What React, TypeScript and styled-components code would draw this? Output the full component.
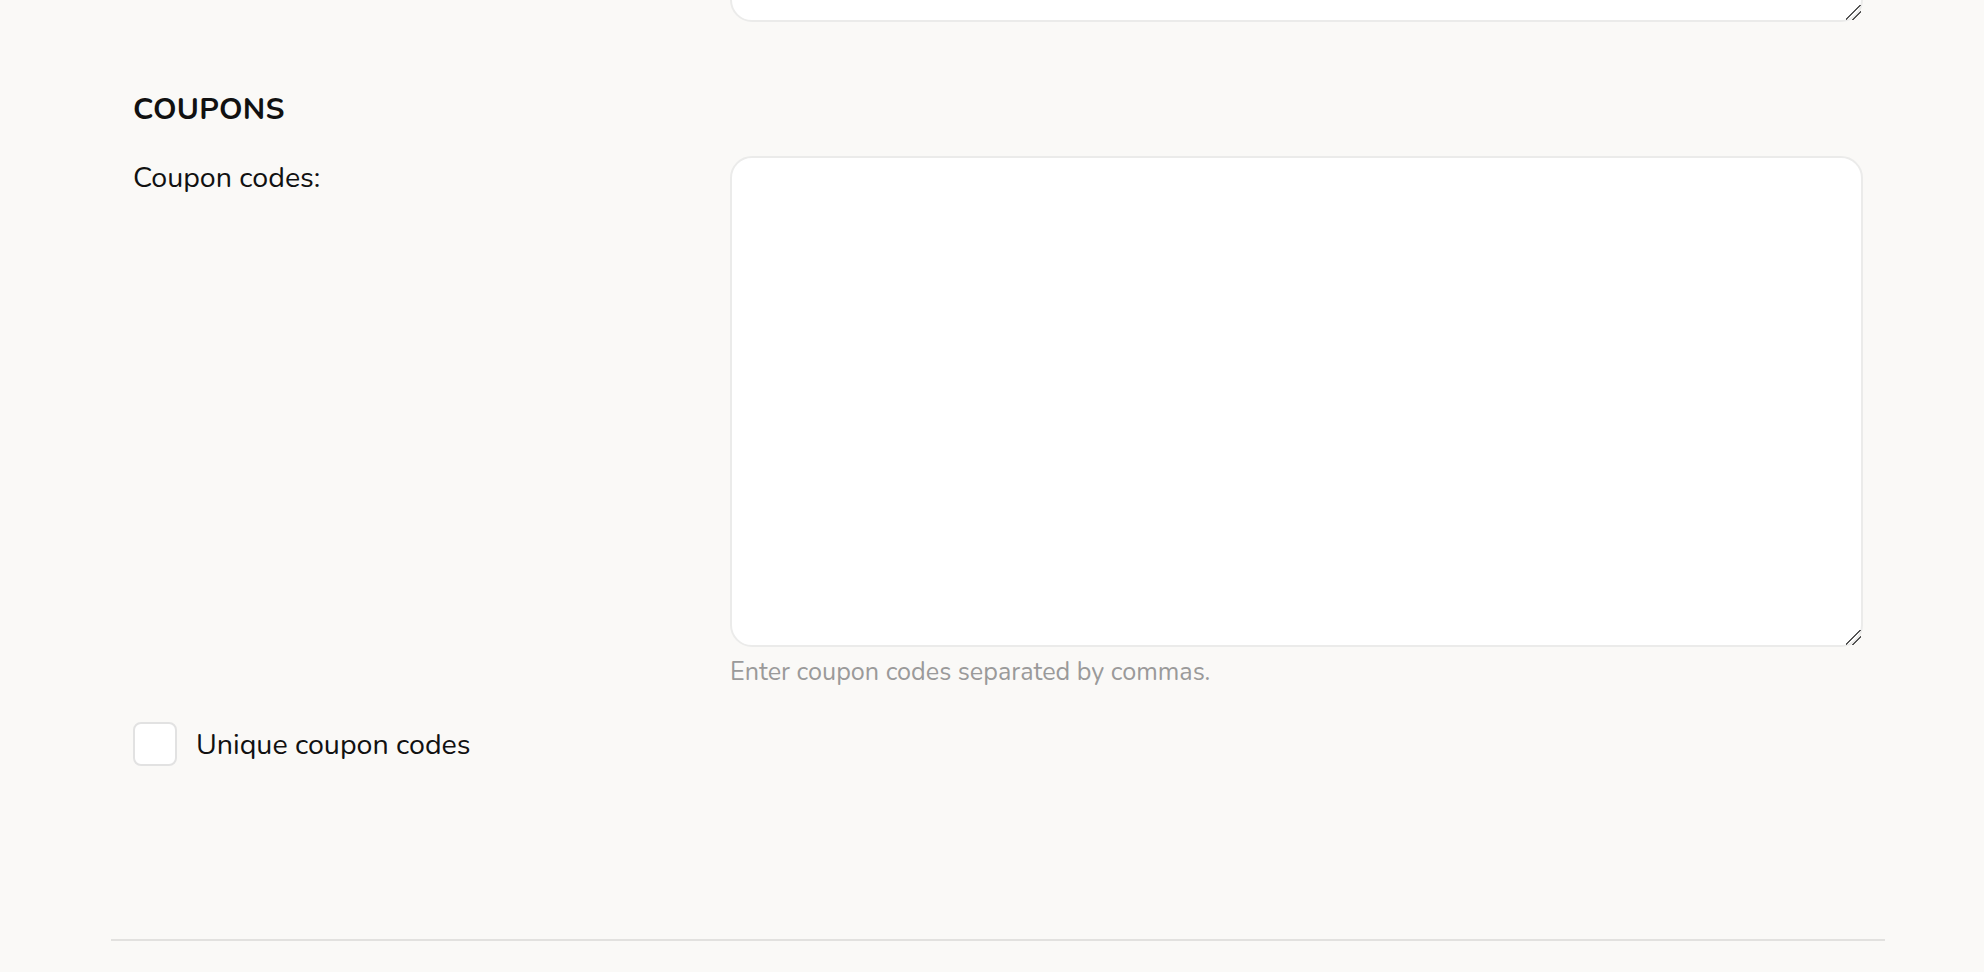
import { FC } from "react";
import styled, { createGlobalStyle } from "styled-components";

const GlobalStyle = createGlobalStyle`
  html, body {
    margin: 0;
    padding: 0;
    background: #faf9f7;
    font-family: "Nunito", "Lato", "Noto Sans", sans-serif;
    color: #111;
  }
`;

const Page = styled.div`
  width: 1774px;
  margin: 0 auto 0 111px;
`;

const Inner = styled.div`
  padding: 0 22px;
`;

const CutOff = styled.div`
  height: 22px;
  overflow: hidden;
  display: flex;
  align-items: flex-end;
  padding-left: 597px;
`;

const Section = styled.section`
  padding-top: 64px;
`;

const Heading = styled.h2`
  margin: 0;
  font-size: 30px;
  line-height: 48px;
  font-weight: 700;
  letter-spacing: 0.3px;
`;

const FieldRow = styled.div`
  display: grid;
  grid-template-columns: 597px 1fr;
  margin-top: 22px;
`;

const Label = styled.label`
  font-size: 28.6px;
  line-height: 36px;
  padding-top: 4px;
`;

const Field = styled.div`
  display: flex;
  flex-direction: column;
`;

const TextArea = styled.textarea<{ $height: number }>`
  box-sizing: border-box;
  width: 100%;
  height: ${(p) => p.$height}px;
  border: 2px solid #ebebea;
  border-radius: 22px;
  background: #fff;
  resize: vertical;
  font: inherit;
  font-size: 26px;
  padding: 16px 20px;
  outline: none;
  display: block;

  &::-webkit-resizer {
    background: linear-gradient(
      135deg,
      transparent 0 44%,
      #555 44% 52%,
      transparent 52% 68%,
      #555 68% 76%,
      transparent 76%
    );
  }
`;

const Hint = styled.div`
  margin-top: 10px;
  font-size: 25.2px;
  line-height: 30px;
  color: #9a9a9a;
`;

const CheckRow = styled.label`
  display: flex;
  align-items: center;
  gap: 19px;
  margin-top: 35px;
  font-size: 28.6px;
  cursor: pointer;
`;

const Box = styled.span`
  box-sizing: border-box;
  width: 44px;
  height: 44px;
  border: 2px solid #e2e2e2;
  border-radius: 8px;
  background: #fff;
  flex: none;
`;

const Divider = styled.hr`
  border: none;
  border-top: 2px solid #e2e1df;
  margin: 173px 0 0;
`;

const App: FC = () => (
  <>
    <GlobalStyle />
    <Page>
      <Inner>
        <CutOff>
          <TextArea $height={200} aria-label="Previous field" />
        </CutOff>
        <Section>
          <Heading>COUPONS</Heading>
          <FieldRow>
            <Label htmlFor="coupons">Coupon codes:</Label>
            <Field>
              <TextArea id="coupons" $height={491} />
              <Hint>Enter coupon codes separated by commas.</Hint>
            </Field>
          </FieldRow>
          <CheckRow>
            <Box />
            Unique coupon codes
          </CheckRow>
        </Section>
      </Inner>
      <Divider />
    </Page>
  </>
);

export default App;
